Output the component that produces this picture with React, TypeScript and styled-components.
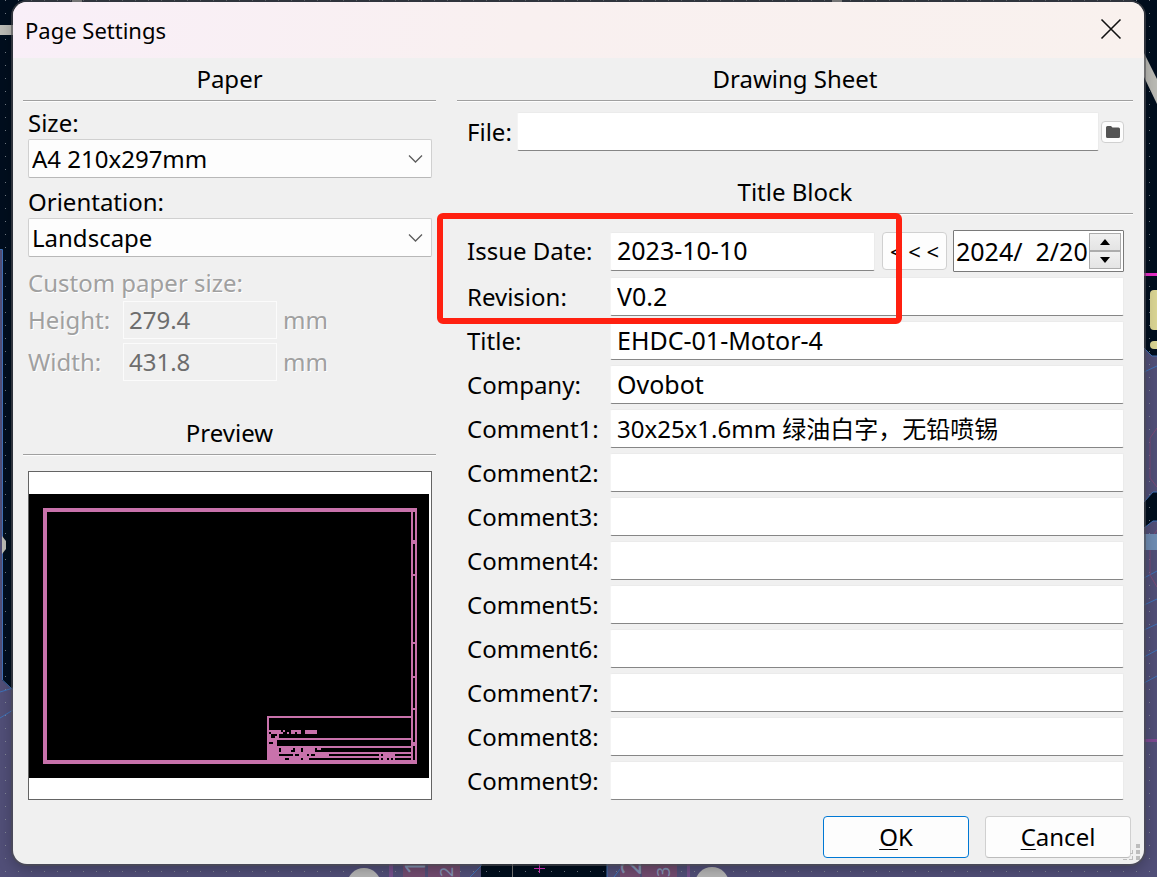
import React from 'react';
import styled, { createGlobalStyle } from 'styled-components';

const FONT = '"Noto Sans", "Noto Sans CJK SC", sans-serif';

const GlobalStyle = createGlobalStyle`
  *, *::before, *::after { box-sizing: border-box; }
  body { margin: 0; background: #514f78; font-family: ${FONT}; }
  input, select, button { font-family: inherit; }
`;

const Desktop = styled.main`
  position: relative;
  min-height: 100vh;
  padding: 2px 13px 13px;
  overflow: hidden;
`;

const Backdrop = styled.svg`
  position: absolute;
  inset: 0;
  width: 100%;
  height: 100%;
`;

const Dialog = styled.section`
  position: relative;
  border-radius: 14px;
  background: #f0f0f0;
  color: #000;
  font-size: 24px;
  line-height: 32px;
  box-shadow: 0 0 0 2px rgba(78, 78, 84, 0.6), 0 4px 16px rgba(0, 0, 0, 0.3);
`;

const TitleBar = styled.header`
  display: flex;
  align-items: center;
  justify-content: space-between;
  height: 56px;
  padding: 0 12px;
  border-radius: 14px 14px 0 0;
  background: linear-gradient(100deg, #f9eff8 0%, #f9f0f0 45%, #f9f1ee 100%);
`;

const DialogTitle = styled.h1`
  margin: 0;
  font-size: 22px;
  font-weight: 400;
`;

const CloseButton = styled.button`
  display: flex;
  align-items: center;
  justify-content: center;
  width: 42px;
  height: 40px;
  padding: 0 0 2px;
  border: 0;
  background: transparent;
`;

const Columns = styled.div`
  display: grid;
  grid-template-columns: 413fr 676fr;
  column-gap: 21px;
  padding: 0 11px 0 10px;
`;

const Column = styled.div`
  display: flex;
  flex-direction: column;
`;

const Group = styled.section<{ $grow?: boolean }>`
  position: relative;
  display: flex;
  flex-direction: column;
  flex: ${(p) => (p.$grow ? 1 : 'none')};
`;

const GroupTitle = styled.h2`
  margin: 0;
  padding: 5px 0;
  border-bottom: 1px solid #a0a0a0;
  box-shadow: 0 1px 0 #fdfdfd;
  font-size: 24px;
  line-height: 32px;
  font-weight: 400;
  text-align: center;
`;

const PaperFields = styled.div`
  padding: 6px 4px 27px 5px;
`;

const BlockLabel = styled.label`
  display: block;
`;

const SelectWrap = styled.div`
  position: relative;
  margin-bottom: 8px;
`;

const Select = styled.select`
  display: block;
  appearance: none;
  width: 100%;
  height: 39px;
  padding: 0 30px 0 3px;
  border: 1px solid #d0d0d0;
  border-bottom-color: #b8b8b8;
  border-radius: 2px;
  background: #fdfdfd;
  color: #000;
  font-size: 24px;
`;

const SelectArrow = styled.svg`
  position: absolute;
  top: 15px;
  right: 9px;
  pointer-events: none;
`;

const CustomSize = styled.fieldset`
  margin: 0;
  padding: 2px 0 0;
  border: 0;
  color: #a0a0a0;
  text-shadow: 1px 1px 0 #fff;
`;

const CustomLegend = styled.legend`
  float: left;
  width: 100%;
  padding: 0 0 2px;
`;

const SizeRow = styled.div`
  clear: both;
  display: grid;
  grid-template-columns: 95px 154px 1fr;
  align-items: center;
  margin-bottom: 4px;
`;

const SizeInput = styled.input`
  width: 100%;
  height: 38px;
  padding: 0 5px 2px;
  border: 1px solid #fbfbfb;
  background: #f0f0f0;
  color: #6d6d6d;
  font-size: 24px;
`;

const Unit = styled.span`
  padding-left: 6px;
`;

const PreviewFrame = styled.div`
  display: flex;
  align-items: center;
  flex: 1;
  margin: 16px 4px 0 5px;
  padding-right: 2px;
  border: 1px solid #646464;
  background: #fff;
`;

const PreviewDrawing = styled.svg`
  display: block;
  width: 100%;
`;

const FileRow = styled.div`
  display: flex;
  align-items: center;
  padding: 11px 9px 20px 10px;
`;

const FileLabel = styled.label`
  width: 50px;
`;

const TextInput = styled.input<{ $size?: number }>`
  flex: 1;
  min-width: 0;
  width: 100%;
  height: 39px;
  padding: 0 6px 2px;
  border: 1px solid #ebebeb;
  border-left-color: #f4f4f4;
  border-bottom-color: #868686;
  border-radius: 2px;
  background: #fff;
  color: #000;
  font-size: ${(p) => p.$size ?? 24}px;
`;

const SmallButton = styled.button`
  display: flex;
  align-items: center;
  justify-content: center;
  width: 23px;
  height: 22px;
  margin-left: 2px;
  padding: 0;
  border: 1px solid #d0d0d0;
  border-radius: 4px;
  background: #fdfdfd;
`;

const FieldList = styled.div`
  display: flex;
  flex-direction: column;
  gap: 5px;
  padding: 16px 9px 0 10px;
`;

const Field = styled.div`
  display: grid;
  grid-template-columns: 143px 1fr;
  align-items: center;
`;

const FieldLabel = styled.label``;

const DateControls = styled.div`
  display: flex;
  align-items: center;
  min-width: 0;
`;

const CopyButton = styled.button`
  width: 65px;
  height: 38px;
  margin: 0 6px 0 7px;
  padding: 0;
  border: 1px solid #d0d0d0;
  border-radius: 4px;
  background: #fdfdfd;
  color: #000;
  font-size: 22px;
`;

const DatePicker = styled.div`
  display: flex;
  width: 171px;
  height: 42px;
  padding: 2px;
  border: 1px solid #7a7a7a;
  border-radius: 1px;
  background: #fff;
`;

const DateInput = styled.input`
  flex: 1;
  min-width: 0;
  padding: 0;
  border: 0;
  background: transparent;
  color: #000;
  font-size: 25px;
  white-space: pre;
`;

const Spinner = styled.div`
  display: flex;
  flex-direction: column;
  width: 32px;
`;

const SpinButton = styled.button`
  display: flex;
  align-items: center;
  justify-content: center;
  flex: 1;
  padding: 0;
  border: 1px solid #acacac;
  background: linear-gradient(#f0f0f0, #e4e4e4);
`;

const Highlight = styled.div`
  position: absolute;
  top: 42px;
  left: -20px;
  right: 231px;
  height: 111px;
  border: 6px solid #ff2010;
  border-radius: 6px;
  pointer-events: none;
`;

const Footer = styled.footer`
  display: flex;
  justify-content: flex-end;
  gap: 16px;
  padding: 16px 13px 6px;
`;

const ActionButton = styled.button<{ $primary?: boolean }>`
  width: 146px;
  height: 42px;
  padding: 0;
  border: 1px solid ${(p) => (p.$primary ? '#0078d4' : '#d0d0d0')};
  border-bottom-color: ${(p) => (p.$primary ? '#0078d4' : '#bcbcbc')};
  border-radius: 4px;
  background: #fdfdfd;
  color: #000;
  font-size: 24px;
  line-height: 32px;

  u { text-decoration-thickness: 1px; text-underline-offset: 3px; }
`;

const ResizeGrip = styled.svg`
  position: absolute;
  right: 4px;
  bottom: 3px;
`;

const FIELDS = [
  { id: 'revision', label: 'Revision:', value: 'V0.2', size: 25 },
  { id: 'title', label: 'Title:', value: 'EHDC-01-Motor-4', size: 25 },
  { id: 'company', label: 'Company:', value: 'Ovobot', size: 25 },
  { id: 'comment1', label: 'Comment1:', value: '30x25x1.6mm 绿油白字，无铅喷锡', size: 24 },
  ...[2, 3, 4, 5, 6, 7, 8, 9].map((n) => ({ id: `comment${n}`, label: `Comment${n}:`, value: '', size: 24 })),
];

// Rows of the sheet's title block: [y, [x start, x end], ...]
const SHEET_ROWS: [number, ...[number, number][]][] = [
  [111, [119, 191]],
  [118, [119, 126], [127, 128], [131, 136], [138, 144]],
  [119, [119, 120], [121, 127], [129, 130], [131, 133], [134, 136], [138, 144]],
  [120, [119, 121], [124, 125]],
  [121, [119, 121], [123, 125]],
  [122, [119, 191]],
  [123, [119, 124]],
  [124, [119, 120], [122, 124]],
  [125, [119, 124]],
  [126, [119, 191]],
  [127, [119, 125], [126, 132], [133, 136], [137, 143], [144, 146]],
  [128, [119, 125], [126, 131], [133, 136], [137, 143]],
  [129, [119, 191]],
  [130, [119, 125], [132, 133], [135, 139], [140, 141], [143, 150], [175, 176], [177, 183]],
  [131, [119, 191]],
  [132, [119, 128], [130, 136], [137, 140], [175, 176], [177, 179], [180, 181], [182, 183]],
];

const SHEET_TICKS: [number, number][] = [[23, 2], [40, 1], [74, 1], [91, 1], [107, 1], [124, 2]];

function SheetPreview() {
  return (
    <PreviewDrawing viewBox="0 0 200 142" shapeRendering="crispEdges" role="img" aria-label="Sheet preview">
      <rect width="200" height="142" fill="#000" />
      <g fill="#c872ab">
        <path d="M7 7H194V135H7ZM9 9V133H191V9ZM192 9V133H193V9Z" fillRule="evenodd" />
        {SHEET_TICKS.map(([y, h]) => (
          <rect key={y} x="192" y={y} width="1" height={h} />
        ))}
        <rect x="119" y="111" width="1" height="22" />
        {SHEET_ROWS.map(([y, ...runs]) =>
          runs.map(([a, b]) => <rect key={`${y}-${a}`} x={a} y={y} width={b - a} height="1" />),
        )}
      </g>
    </PreviewDrawing>
  );
}

function BoardBackdrop() {
  return (
    <Backdrop viewBox="0 0 1157 877" preserveAspectRatio="none" aria-hidden="true">
      <defs>
        <pattern id="grid" width="13" height="13" patternUnits="userSpaceOnUse">
          <rect x="5" y="0" width="1" height="1" fill="#8d949c" />
        </pattern>
      </defs>
      <rect width="1157" height="877" fill="#514f78" />
      <path d="M0 0H1157V356H1152L1144 348H600V600H13V690L2 680V249H0Z" fill="#000e1e" />
      <path d="M1157 492H1153L1144 502V528L1153 521H1157Z" fill="#000e1e" />
      <rect x="481" y="860" width="126" height="17" fill="#000e1e" />
      <rect width="1157" height="877" fill="url(#grid)" opacity="0.8" />
      <g fill="none" stroke="#3f72b8">
        <path d="M0 249.500H2.500V680L13 690M0 692L13 688M0 718L13 710" />
        <path d="M1144 348L1152 356H1157M1144 502L1153 492H1157M1144 528L1153 521H1157" />
        <path d="M1144 372L1157 366M1144 578L1157 571M1144 605L1157 599M1144 630L1157 624M1144 657L1157 650M1144 683L1157 676" />
        <path d="M470 877L481 866V860M607 860V877M614 877L624 864" />
      </g>
      <path d="M1157 428L1150 438V478L1157 487M1157 530L1150 540V575L1157 587" fill="none" stroke="#7c4a76" />
      <g fill="#bcbcb6">
        <rect x="0" y="25" width="13" height="10" />
        <rect x="72" y="0" width="10" height="2" />
        <rect x="832" y="0" width="10" height="2" />
        <path d="M1144 53L1157 79V104L1144 77Z" />
        <path d="M2 536L6 541V549L2 554Z" />
      </g>
      <rect x="1144" y="273" width="13" height="3" fill="#e82fc8" />
      <rect x="1150" y="290" width="20" height="40" rx="4" fill="#dbd694" />
      <rect x="1150" y="341" width="20" height="8" rx="4" fill="#dbd694" />
      <rect x="1144" y="534" width="13" height="16" fill="#6f8cb3" />
      <rect x="1144" y="739" width="13" height="3" fill="#7c4990" />
      <g fill="#734c70">
        <rect x="403" y="860" width="22" height="17" />
        <rect x="428" y="860" width="32" height="17" />
        <rect x="620" y="860" width="20" height="17" />
        <rect x="642" y="860" width="35" height="17" />
      </g>
      <g fill="#75508c">
        <rect x="389" y="860" width="4" height="17" />
        <rect x="687" y="860" width="3" height="17" />
      </g>
      <g fill="#8494b5" fontFamily="Noto Sans, sans-serif">
        <text transform="translate(425 875) rotate(-90)" fontSize="28">1</text>
        <text transform="translate(453 877) rotate(-90)" fontSize="18">2</text>
        <text transform="translate(641 875) rotate(-90)" fontSize="28">2</text>
        <text transform="translate(670 877) rotate(-90)" fontSize="18">3</text>
      </g>
      <path d="M512.500 860V877" stroke="#777" />
      <path d="M534 868.500H545M539.500 864V873" stroke="#d42fc0" />
      <circle cx="364" cy="885" r="17" fill="#b5b5b5" />
      <circle cx="712" cy="884" r="17" fill="#b5b5b5" />
    </Backdrop>
  );
}

function Chevron() {
  return (
    <SelectArrow width="15" height="10" viewBox="0 0 15 10" fill="none" stroke="#5c5c5c" aria-hidden="true">
      <path d="M1 1.500L7.500 8L14 1.500" strokeWidth="1.300" />
    </SelectArrow>
  );
}

export default function App() {
  return (
    <>
      <GlobalStyle />
      <Desktop>
        <BoardBackdrop />
        <Dialog role="dialog" aria-labelledby="dialog-title">
          <TitleBar>
            <DialogTitle id="dialog-title">Page Settings</DialogTitle>
            <CloseButton type="button" aria-label="Close">
              <svg width="22" height="22" viewBox="0 0 22 22" stroke="#111" strokeWidth="1.600" aria-hidden="true">
                <path d="M1.500 1.500L20.500 20.500M20.500 1.500L1.500 20.500" />
              </svg>
            </CloseButton>
          </TitleBar>

          <Columns>
            <Column>
              <Group>
                <GroupTitle>Paper</GroupTitle>
                <PaperFields>
                  <BlockLabel htmlFor="size">Size:</BlockLabel>
                  <SelectWrap>
                    <Select id="size" defaultValue="a4">
                      <option value="a4">A4 210x297mm</option>
                    </Select>
                    <Chevron />
                  </SelectWrap>
                  <BlockLabel htmlFor="orientation">Orientation:</BlockLabel>
                  <SelectWrap>
                    <Select id="orientation" defaultValue="landscape">
                      <option value="landscape">Landscape</option>
                      <option value="portrait">Portrait</option>
                    </Select>
                    <Chevron />
                  </SelectWrap>
                  <CustomSize disabled>
                    <CustomLegend>Custom paper size:</CustomLegend>
                    <SizeRow>
                      <label htmlFor="height">Height:</label>
                      <SizeInput id="height" defaultValue="279.4" />
                      <Unit>mm</Unit>
                    </SizeRow>
                    <SizeRow>
                      <label htmlFor="width">Width:</label>
                      <SizeInput id="width" defaultValue="431.8" />
                      <Unit>mm</Unit>
                    </SizeRow>
                  </CustomSize>
                </PaperFields>
              </Group>
              <Group $grow>
                <GroupTitle>Preview</GroupTitle>
                <PreviewFrame>
                  <SheetPreview />
                </PreviewFrame>
              </Group>
            </Column>

            <Column>
              <Group>
                <GroupTitle>Drawing Sheet</GroupTitle>
                <FileRow>
                  <FileLabel htmlFor="file">File:</FileLabel>
                  <TextInput id="file" />
                  <SmallButton type="button" aria-label="Browse">
                    <svg width="14" height="12" viewBox="0 0 14 12" fill="#545454" aria-hidden="true">
                      <path d="M1.500 0H5L6.500 1.500H12.500Q14 1.500 14 3V10.500Q14 12 12.500 12H1.500Q0 12 0 10.500V1.500Q0 0 1.500 0Z" />
                    </svg>
                  </SmallButton>
                </FileRow>
              </Group>
              <Group $grow>
                <GroupTitle>Title Block</GroupTitle>
                <FieldList>
                  <Field>
                    <FieldLabel htmlFor="issue-date">Issue Date:</FieldLabel>
                    <DateControls>
                      <TextInput id="issue-date" $size={25} defaultValue="2023-10-10" />
                      <CopyButton type="button" aria-label="Copy date">{'< < <'}</CopyButton>
                      <DatePicker>
                        <DateInput aria-label="Date" defaultValue={'2024/  2/20'} />
                        <Spinner>
                          <SpinButton type="button" aria-label="Next day">
                            <svg width="10" height="6" viewBox="0 0 10 6" aria-hidden="true"><path d="M5 0L10 6H0Z" /></svg>
                          </SpinButton>
                          <SpinButton type="button" aria-label="Previous day">
                            <svg width="10" height="6" viewBox="0 0 10 6" aria-hidden="true"><path d="M5 6L10 0H0Z" /></svg>
                          </SpinButton>
                        </Spinner>
                      </DatePicker>
                    </DateControls>
                  </Field>
                  {FIELDS.map((f) => (
                    <Field key={f.id}>
                      <FieldLabel htmlFor={f.id}>{f.label}</FieldLabel>
                      <TextInput id={f.id} $size={f.size} defaultValue={f.value} />
                    </Field>
                  ))}
                </FieldList>
                <Highlight />
              </Group>
            </Column>
          </Columns>

          <Footer>
            <ActionButton type="button" $primary><u>O</u>K</ActionButton>
            <ActionButton type="button"><u>C</u>ancel</ActionButton>
          </Footer>
          <ResizeGrip width="17" height="17" viewBox="0 0 17 17" fill="#bdbdbd" aria-hidden="true">
            <path d="M13 0h4v4h-4zM13 6h4v4h-4zM13 12h4v4h-4zM9 6h1v4h-3v-1h2zM9 12h1v4h-4v-1h3zM0 15h4v1h-4z" />
          </ResizeGrip>
        </Dialog>
      </Desktop>
    </>
  );
}
